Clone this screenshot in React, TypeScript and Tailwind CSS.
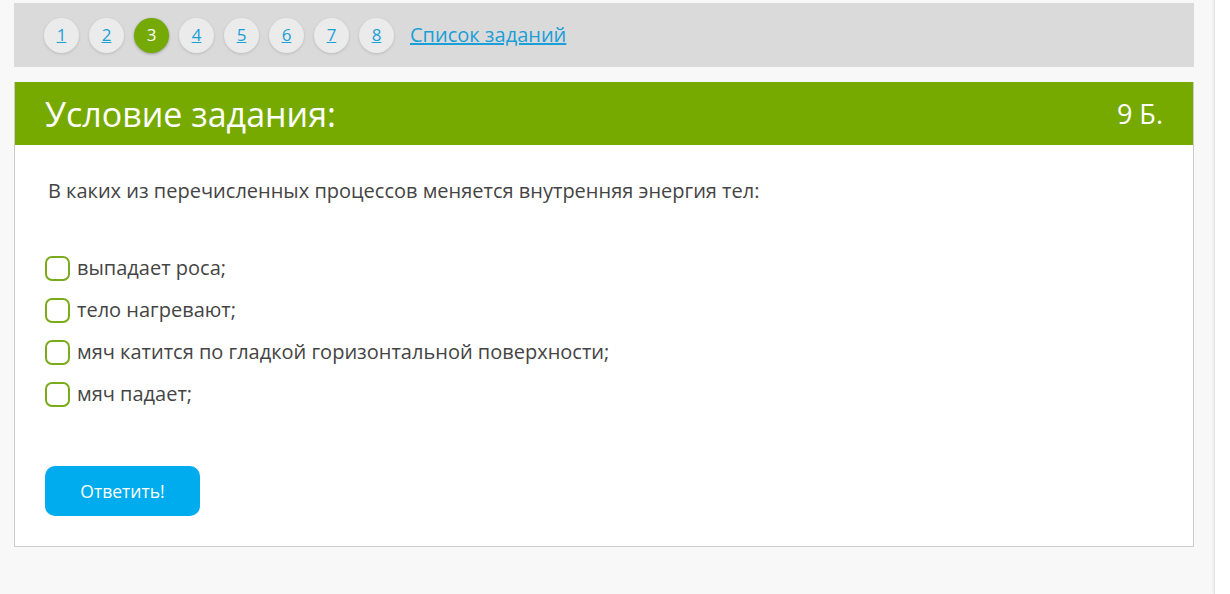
import { useState } from "react";

const pages = [1, 2, 3, 4, 5, 6, 7, 8];
const options = [
  "выпадает роса;",
  "тело нагревают;",
  "мяч катится по гладкой горизонтальной поверхности;",
  "мяч падает;",
];

export default function App() {
  const [checked, setChecked] = useState<boolean[]>([false, false, false, false]);

  return (
    <div className="flex w-[1230px] h-[594px] bg-[#f8f8f8] font-['Open_Sans',sans-serif] text-[#444]">
      <div className="flex-1 pl-[14px] pr-[20px] pt-[3px]">
        {/* Pagination */}
        <div className="flex items-center h-[64px] bg-[#dadada] pl-[30px] gap-[10px]">
          {pages.map((p) =>
            p === 3 ? (
              <span key={p} className="w-[35px] h-[35px] rounded-full bg-[#75a906] text-white flex items-center justify-center text-[17px] shadow-[0_1px_3px_rgba(0,0,0,0.3)]">
                {p}
              </span>
            ) : (
              <a key={p} href="#" className="w-[35px] h-[35px] rounded-full bg-[#ebebeb] text-[#1a9fd8] underline flex items-center justify-center text-[17px] shadow-[0_1px_3px_rgba(0,0,0,0.15)]">
                {p}
              </a>
            )
          )}
          <a href="#" className="ml-[6px] text-[20px] text-[#1a9fd8] underline">Список заданий</a>
        </div>

        {/* Task card */}
        <div className="mt-[15px] bg-white border border-[#cccccc] border-t-0 h-[465px]">
          <div className="flex items-center justify-between h-[63px] bg-[#77aa00] text-white px-[30px]">
            <h1 className="text-[34px] leading-none">Условие задания:</h1>
            <span className="text-[27px] leading-none">9 Б.</span>
          </div>

          <div className="px-[30px]">
            <p className="mt-[31px] ml-[3px] text-[20px] leading-[30px]">В каких из перечисленных процессов меняется внутренняя энергия тел:</p>

            <div className="mt-[49px] flex flex-col gap-[16px]">
              {options.map((o, i) => (
                <label key={i} className="flex items-center gap-[7px] h-[26px] cursor-pointer">
                  <span
                    onClick={() => setChecked(checked.map((c, j) => (j === i ? !c : c)))}
                    className={`w-[25px] h-[25px] rounded-[7px] border-2 border-[#7aab1a] ${checked[i] ? "bg-[#7aab1a]" : "bg-white"}`}
                  />
                  <span className="text-[20px]">{o}</span>
                </label>
              ))}
            </div>

            <button className="mt-[59px] w-[155px] h-[50px] rounded-[10px] bg-[#00acee] text-white text-[17.5px]">
              Ответить!
            </button>
          </div>
        </div>
      </div>
      <div className="w-[16px] bg-white border-l border-[#e2e2e2] shadow-[-1px_0_2px_rgba(0,0,0,0.06)]" />
    </div>
  );
}
